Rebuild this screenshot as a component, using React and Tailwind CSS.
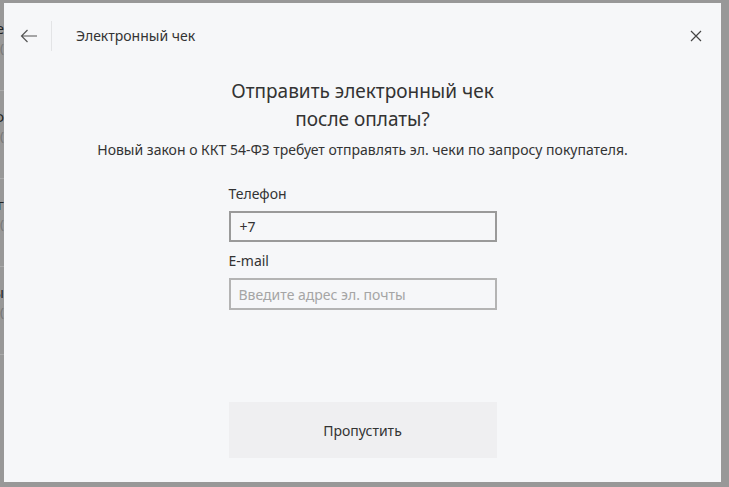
import React from 'react';

const font = { fontFamily: '"Noto Sans", "Open Sans", sans-serif' };

// rows of the list that lies under the dialog
const behind = ['е', 'ф', 'г', 'ы'];

const ReceiptDialog = () => {
  return (
    <div className="flex-1 bg-[#f6f7f9] flex flex-col text-[#333]">
      {/* header */}
      <div className="h-[48px] mt-[9px] flex items-center pl-[15px] pr-[14px]">
        <button className="w-[20px] h-[20px] flex items-center justify-center text-[#555]">
          <svg width="18" height="14" viewBox="0 0 18 14" fill="none" stroke="currentColor" strokeWidth="1.2">
            <path d="M17 7H1.5M7.5 1L1.5 7l6 6" />
          </svg>
        </button>
        <div className="w-px h-[30px] bg-[#e3e4e6] ml-[12px]" />
        <div className="ml-[24px] text-[14px] leading-none">Электронный чек</div>
        <button className="ml-auto w-[22px] h-[22px] flex items-center justify-center text-[#444]">
          <svg width="12" height="12" viewBox="0 0 12 12" stroke="currentColor" strokeWidth="1.2">
            <path d="M1 1l10 10M11 1L1 11" />
          </svg>
        </button>
      </div>

      {/* body */}
      <div className="flex flex-col items-center">
        <h2 className="mt-[17px] text-[19px] leading-[28px] text-center font-normal">
          Отправить электронный чек
          <br />
          после оплаты?
        </h2>
        <p className="mt-[8px] text-[14px] leading-[18px] text-center">
          Новый закон о ККТ 54-ФЗ требует отправлять эл. чеки по запросу покупателя.
        </p>

        <div className="w-[268px] mt-[25px] flex flex-col">
          <label className="text-[14px] leading-[20px]">Телефон</label>
          <div className="mt-[7px] h-[31px] border-2 border-[#9a9a9a] flex items-center px-[9px] text-[14px]">+7</div>
          <label className="mt-[9px] text-[14px] leading-[20px]">E-mail</label>
          <div className="mt-[7px] h-[32px] border-2 border-[#b4b4b4] flex items-center px-[8px] text-[14px] text-[#a5a5a5]">
            Введите адрес эл. почты
          </div>

          <button className="mt-[92px] h-[56px] bg-[#efeff1] text-[14px] text-[#333] flex items-center justify-center">
            Пропустить
          </button>
        </div>
      </div>
    </div>
  );
};

export default function App() {
  return (
    <div className="w-[729px] h-[487px] bg-[#989898] flex pt-[3px] pb-[5px] pr-[8px] overflow-hidden" style={font}>
      <div className="w-[4px] shrink-0 overflow-hidden flex flex-col">
        {behind.map((ch, i) => (
          <div key={i} className="h-[88px] shrink-0 flex flex-col items-end border-b border-[#aaaaaa]">
            <div className="mt-[16px] text-[14px] leading-[20px] text-[#222]">{ch}</div>
            <div className="text-[13px] leading-[18px] text-[#777]">(</div>
          </div>
        ))}
      </div>
      <ReceiptDialog />
    </div>
  );
}
